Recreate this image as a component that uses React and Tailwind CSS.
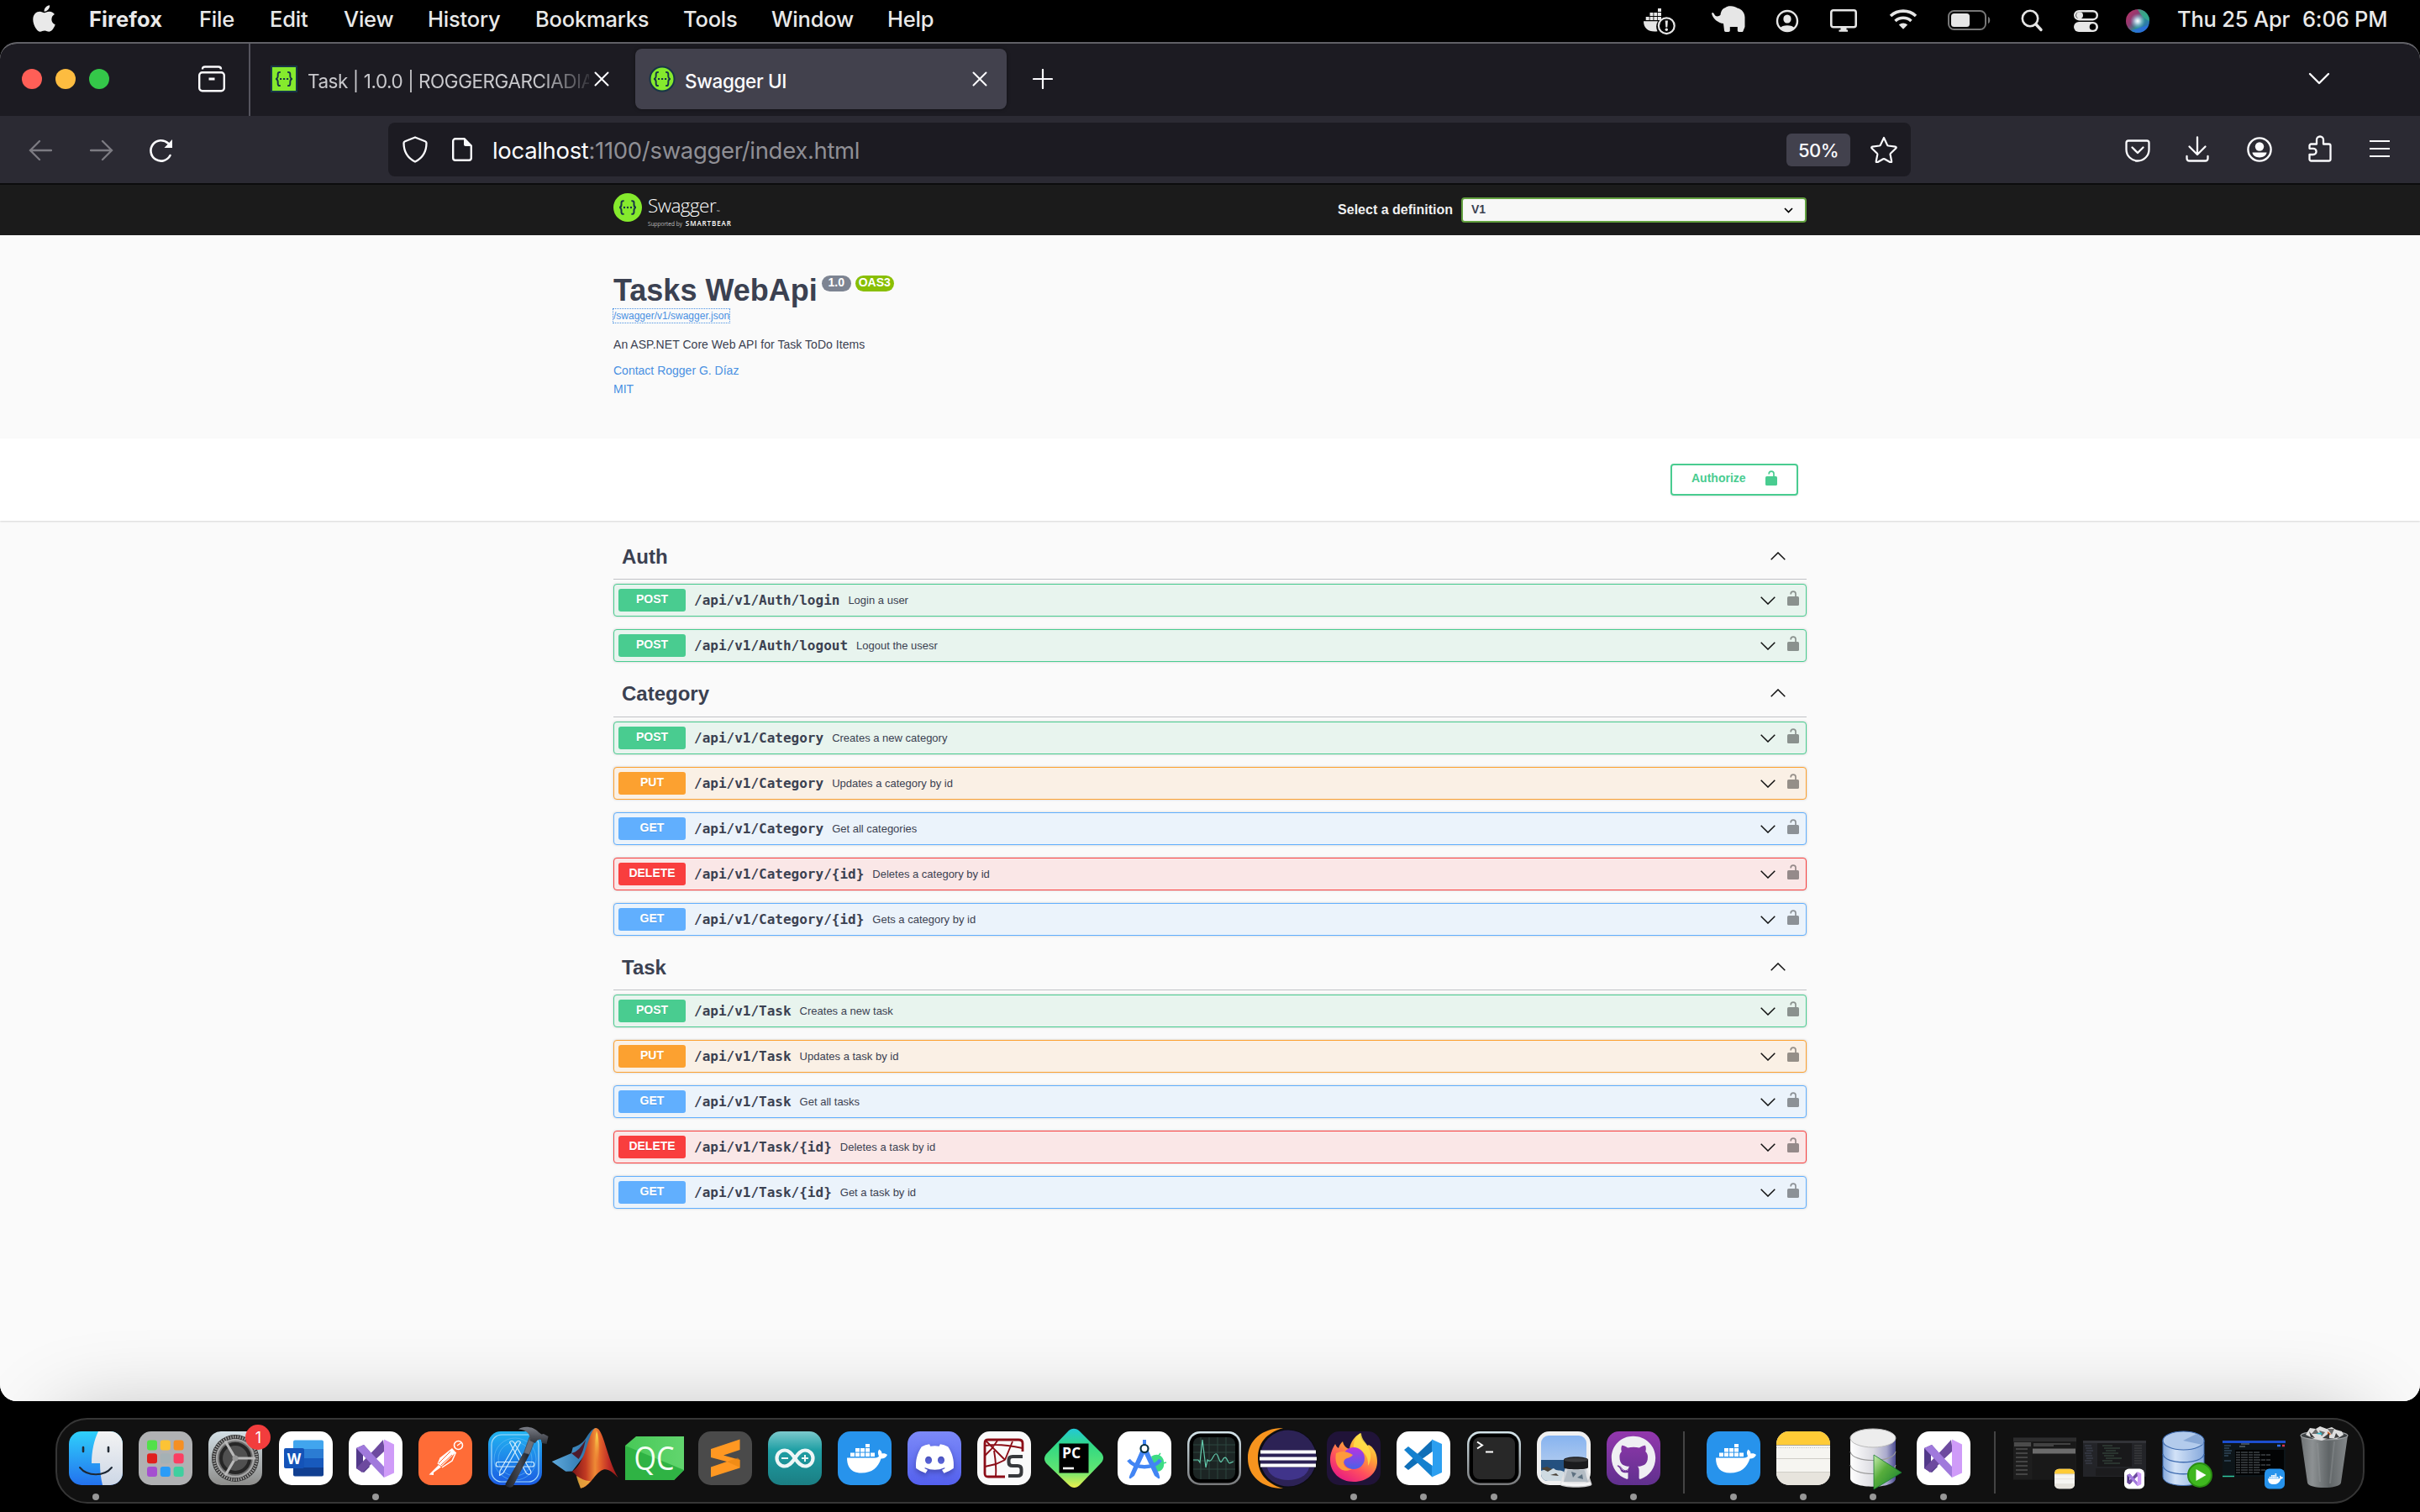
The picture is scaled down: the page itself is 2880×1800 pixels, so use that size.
import React from "react";
import { FaApple, FaDiscord, FaGithub } from "react-icons/fa";

/* ---------- shared marks ---------- */

function SwaggerMark({ size }) {
  return (
    <svg width={size} height={size} viewBox="0 0 34 34" className="shrink-0">
      <circle cx="17" cy="17" r="17" fill="#85ea2d" />
      <path d="M12.6 9.2c-2.6-.3-3.2.8-3.1 2.9.2 2.500.2 4.500-2.300 4.900 2.500.4 2.500 2.400 2.300 4.900-.1 2.100.5 3.200 3.100 2.900M21.400 9.200c2.600-.3 3.200.8 3.100 2.900-.2 2.500-.2 4.500 2.300 4.900-2.500.4-2.500 2.400-2.300 4.900.1 2.100-.5 3.200-3.100 2.900" fill="none" stroke="#173647" strokeWidth="2" />
      <circle cx="13" cy="17" r="1.200" fill="#173647" />
      <circle cx="17" cy="17" r="1.200" fill="#173647" />
      <circle cx="21" cy="17" r="1.200" fill="#173647" />
    </svg>
  );
}

function SwaggerFavicon({ square }) {
  return (
    <svg width="32" height="32" viewBox="0 0 32 32" className="shrink-0">
      {square ? (
        <rect x="1" y="1" width="30" height="30" fill="#85ea2d" stroke="#173647" strokeWidth="2" />
      ) : (
        <circle cx="16" cy="16" r="14.500" fill="#85ea2d" stroke="#173647" strokeWidth="2" />
      )}
      <path d="M11.800 8c-2.600-.3-3.200.8-3.100 2.900.2 2.500.2 4.700-2.500 5.100 2.700.4 2.700 2.600 2.500 5.100-.1 2.100.5 3.200 3.100 2.900M20.200 8c2.600-.3 3.200.8 3.100 2.900-.2 2.500-.2 4.700 2.500 5.100-2.700.4-2.700 2.600-2.500 5.100.1 2.100-.5 3.200-3.100 2.900" fill="none" stroke="#173647" strokeWidth="2" />
      <path d="M11 16h2.200M15 16h2.200M19 16h2.200" stroke="#173647" strokeWidth="2.200" />
    </svg>
  );
}

/* ---------- macOS menu bar ---------- */

function MenuBar() {
  return (
    <div className="flex h-[50px] shrink-0 items-center bg-black pb-[5px] font-['Inter',sans-serif] text-[25.500px] tracking-[-0.2px] font-medium text-[#e9e9e9] [&_span]:translate-y-px">
      <FaApple className="ml-[39px] h-[36px] w-[27px] shrink-0 -translate-y-[1px]" />
      <span className="ml-[40px] w-[131px] font-bold tracking-[0.1px]">Firefox</span>
      <span className="w-[84px]">File</span>
      <span className="w-[88px]">Edit</span>
      <span className="w-[100px]">View</span>
      <span className="w-[128px]">History</span>
      <span className="w-[176px]">Bookmarks</span>
      <span className="w-[105px]">Tools</span>
      <span className="w-[138px]">Window</span>
      <span>Help</span>

      <div className="ml-auto flex items-center">
        <svg width="40" height="34" viewBox="0 -2 40 34" className="mr-[40px] translate-y-[2px]" fill="#e6e6e6">
          <path d="M2.700 10h4v4h-4zM7.500 10h4v4h-4zM12.300 10h4v4h-4zM17 10h4v4h-4zM7.500 5h4v4h-4zM12.300 5h4v4h-4zM17 5h4v4h-4zM17 0h4v4h-4z" />
          <path d="M0 15.300h17c-2.500 4-2.300 8-.5 12C6 28.500 0 24 0 15.300z" />
          <circle cx="27.300" cy="20.700" r="9.400" fill="none" stroke="#e6e6e6" strokeWidth="2.200" />
          <path d="M25.700 14.500h3.200l-.6 8h-2z" />
          <circle cx="27.300" cy="25.300" r="1.700" />
        </svg>
        <svg width="42" height="32" viewBox="-1 0 42 32" className="mr-[35px]" fill="#e6e6e6">
          <path d="M0 9c1-2 2.300-.8 3.300 1.200 1.600 3 4.700 2.800 7.200.6.500-5 3-8 6-8.800C18 .5 20.500 0 23 .2c3 0 5.500 1 8 2.500 5 1.300 8.500 5.500 8.500 11V25l-1.800 4.500c-.3 1-.8 1.500-1.700 1.500h-3.500c-1 0-1.700-.6-1.700-1.700V25h-9v4.300c0 1.100-.6 1.700-1.700 1.700h-3.400c-1 0-1.500-.6-1.700-1.700L14 21C8.500 20.500 1.500 16 0 9z" />
        </svg>
        <svg width="28" height="28" viewBox="0 0 28 28" className="mr-[37px] translate-y-[2px]">
          <circle cx="14" cy="14" r="12" fill="none" stroke="#e6e6e6" strokeWidth="2.400" />
          <path d="M14 6.500c3 0 4.600 2.200 4.600 4.900S17 16.500 14 16.500s-4.600-2.400-4.600-5.100S11 6.500 14 6.500zM5 22.500c3-4.500 15-4.500 18 0-4.500 5-13.500 5-18 0z" fill="#e6e6e6" />
        </svg>
        <svg width="32" height="27" viewBox="0 0 32 27" className="mr-[38px] translate-y-[2px]">
          <rect x="1.300" y="1.300" width="29.400" height="20" rx="2.500" fill="none" stroke="#e6e6e6" strokeWidth="2.600" />
          <path d="M12.500 21h7v3.500H21v2.300H10.500v-2.300h2z" fill="#e6e6e6" />
        </svg>
        <svg width="34" height="25" viewBox="0 0 34 25" className="mr-[36px]">
          <g fill="none" stroke="#e6e6e6" strokeWidth="3.600">
            <path d="M2 9a22 22 0 0 1 30 0" />
            <path d="M7.500 15a14 14 0 0 1 19 0" />
          </g>
          <path d="M11.800 19.500a8 8 0 0 1 10.400 0L17 24.700z" fill="#e6e6e6" />
        </svg>
        <svg width="52" height="24" viewBox="0 0 52 24" className="mr-[35px] translate-y-px">
          <rect x="1" y="1" width="44" height="22" rx="6.500" fill="none" stroke="#777" strokeWidth="2" />
          <rect x="4" y="4" width="22" height="16" rx="3.500" fill="#e6e6e6" />
          <path d="M48 8c3 1 3 7 0 8z" fill="#777" />
        </svg>
        <svg width="27" height="27" viewBox="0 0 27 27" className="mr-[36px] translate-y-[2px]" fill="none" stroke="#e6e6e6">
          <circle cx="11" cy="11" r="9.200" strokeWidth="2.600" />
          <path d="M18 18l6 6.500" strokeWidth="3.400" strokeLinecap="round" />
        </svg>
        <svg width="29" height="26" viewBox="0 0 29 26" className="mr-[33px] translate-y-[2px]">
          <rect x="1.200" y="1.200" width="26.600" height="10" rx="5" fill="none" stroke="#e6e6e6" strokeWidth="2.400" />
          <circle cx="7" cy="6.200" r="4" fill="#e6e6e6" />
          <rect y="14" width="29" height="12" rx="6" fill="#e6e6e6" />
          <circle cx="22.500" cy="20" r="3.800" fill="#000" />
        </svg>
        <svg width="28" height="28" viewBox="0 0 28 28" className="mr-[33px] translate-y-[2px]">
          <defs>
            <radialGradient id="siriCore" cx=".5" cy=".5" r=".5">
              <stop offset="0" stopColor="#fff" />
              <stop offset=".3" stopColor="#cfe9f5" stopOpacity=".85" />
              <stop offset="1" stopColor="#7fb7d8" stopOpacity="0" />
            </radialGradient>
            <linearGradient id="siriBase" x1="0" y1=".1" x2="1" y2=".9">
              <stop offset="0" stopColor="#b93164" />
              <stop offset=".35" stopColor="#8f3a72" />
              <stop offset=".6" stopColor="#2c8f8f" />
              <stop offset="1" stopColor="#2b62c9" />
            </linearGradient>
          </defs>
          <circle cx="14" cy="14" r="14" fill="url(#siriBase)" />
          <path d="M14 0a14 14 0 0 1 14 14c-5-2-10-6-14-14z" fill="#35b08a" opacity=".8" />
          <path d="M6 25c6-1 12-4 21-6-3 8-13 12-21 6z" fill="#2a6fe0" opacity=".8" />
          <circle cx="14" cy="14" r="9" fill="url(#siriCore)" />
        </svg>
        <span className="w-[149px] whitespace-nowrap tracking-[-0.2px]">Thu 25 Apr</span>
        <span className="mr-[39px] w-[101px] whitespace-nowrap tracking-[-0.2px]">6:06 PM</span>
      </div>
    </div>
  );
}

/* ---------- Firefox chrome ---------- */

function CloseX() {
  return (
    <svg width="18" height="18" viewBox="0 0 18 18" className="shrink-0">
      <path d="M1.500 1.500l15 15M16.500 1.500l-15 15" stroke="#fbfbfe" strokeWidth="2" strokeLinecap="round" />
    </svg>
  );
}

function TabStrip() {
  return (
    <div className="flex h-[86px] shrink-0 bg-[#1c1b22] font-['Inter',sans-serif] text-[22.500px] text-[#fbfbfe]">
      <div className="flex h-[84px] shrink-0 items-center">
        <div className="ml-[26px] flex w-[104px] shrink-0 justify-between">
          <span className="size-6 rounded-full bg-[#ff5f57]" />
          <span className="size-6 rounded-full bg-[#fdbc40]" />
          <span className="size-6 rounded-full bg-[#34c749]" />
        </div>
        <svg width="32" height="32" viewBox="0 0 32 32" className="ml-[106px] shrink-0" fill="none" stroke="#fbfbfe">
          <rect x="1.200" y="8.200" width="29.600" height="22" rx="3.500" strokeWidth="2.400" />
          <path d="M5 4.500C5 2.500 6 1.500 8 1.500h16c2 0 3 1 3 3" strokeWidth="2.400" />
          <path d="M12.500 16h7" strokeWidth="3" />
        </svg>
      </div>
      <div className="ml-[28px] h-full w-[2px] shrink-0 bg-[#55545e]" />
      <div className="flex h-[84px] min-w-0 flex-1 items-center">
        <div className="ml-[24px] flex h-[72px] w-[402px] shrink-0 items-center">
          <SwaggerFavicon square />
          <span className="ml-[12px] w-[335px] whitespace-nowrap pt-[5px] tracking-[-0.45px] text-[#c9c9cd] [mask-image:linear-gradient(to_right,black_275px,transparent_345px)]">
            Task | 1.0.0 | ROGGERGARCIADIA
          </span>
          <span className="ml-[6px]"><CloseX /></span>
        </div>
        <div className="ml-[32px] flex h-[72px] w-[442px] shrink-0 items-center rounded-lg bg-[#42414d] pl-4 shadow-[0_0_4px_rgba(0,0,0,0.4)]">
          <SwaggerFavicon />
          <span className="ml-[11px] whitespace-nowrap pt-[5px] font-medium tracking-[-0.35px]">Swagger UI</span>
          <span className="ml-auto mr-[23px]"><CloseX /></span>
        </div>
        <svg width="24" height="24" viewBox="0 0 24 24" className="ml-[31px] shrink-0">
          <path d="M12 1v22M1 12h22" stroke="#fbfbfe" strokeWidth="2.200" strokeLinecap="round" />
        </svg>
        <svg width="26" height="16" viewBox="0 0 26 16" className="ml-auto mr-[107px]">
          <path d="M2 2l11 11L24 2" fill="none" stroke="#fbfbfe" strokeWidth="2.400" strokeLinecap="round" strokeLinejoin="round" />
        </svg>
      </div>
    </div>
  );
}

function Toolbar() {
  return (
    <div className="flex h-[82px] shrink-0 items-center border-b-2 border-[#0c0c0d] bg-[#2b2a33] font-['Inter',sans-serif] text-[#fbfbfe]">
      <svg width="28" height="26" viewBox="0 0 28 26" className="ml-[34px] shrink-0 translate-y-px" fill="none" stroke="#7c7b82" strokeWidth="2.300" strokeLinecap="round">
        <path d="M13 2L2 13l11 11M2 13h25" />
      </svg>
      <svg width="28" height="26" viewBox="0 0 28 26" className="ml-[45px] shrink-0 translate-y-px" fill="none" stroke="#7c7b82" strokeWidth="2.300" strokeLinecap="round">
        <path d="M15 2l11 11-11 11M26 13H1" />
      </svg>
      <svg width="29" height="29" viewBox="0 0 29 29" className="ml-[42px] shrink-0 translate-y-px">
        <path d="M25.500 20A12.200 12.200 0 1 1 23 5.500" fill="none" stroke="#fbfbfe" strokeWidth="2.600" strokeLinecap="round" />
        <path d="M28 1v10H18.500z" fill="#fbfbfe" />
      </svg>
      <div className="ml-[256px] flex h-16 w-[1812px] shrink-0 items-center rounded-lg bg-[#1c1b22]">
        <svg width="30" height="32" viewBox="0 0 30 32" className="ml-[17px]">
          <path d="M15 1.500L27 6.200c1 .4 1.500 1 1.500 2C28.500 18 24 26 15 30.500 6 26 1.500 18 1.500 8.200c0-1 .5-1.600 1.500-2z" fill="none" stroke="#fbfbfe" strokeWidth="2.300" strokeLinejoin="round" />
        </svg>
        <svg width="24" height="28" viewBox="0 0 24 28" className="ml-[29px]">
          <path d="M1.200 4A2.800 2.800 0 0 1 4 1.200h10.500L22.800 9.500V24a2.800 2.800 0 0 1-2.800 2.800H4A2.800 2.800 0 0 1 1.200 24z" fill="none" stroke="#fbfbfe" strokeWidth="2.400" strokeLinejoin="round" />
          <path d="M14 1v7a2 2 0 0 0 2 2h7z" fill="#fbfbfe" />
        </svg>
        <span className="ml-[24px] whitespace-nowrap pt-[3px] text-[27.500px] tracking-[-0.33px] text-[#8f8f95]">
          <span className="text-[#fbfbfe]">localhost</span>:1100/swagger/index.html
        </span>
        <span className="ml-auto flex h-[39px] w-[76px] items-center justify-center rounded-md bg-[#42414d] pt-[2px] text-[22px] font-medium tracking-[-0.6px]">50%</span>
        <svg width="32" height="32" viewBox="0 0 32 32" className="ml-[24px] mr-[16px]">
          <path d="M16 2l4 8.600c.3.500.7.800 1.300.9l8.400 1.100c1 .1 1.300 1.200.6 1.900l-6.200 6c-.4.400-.6.900-.5 1.500l1.600 8.200c.2.900-.7 1.500-1.500 1.100L16.700 27.300c-.5-.3-1-.3-1.500 0L8.200 31.300c-.8.400-1.700-.2-1.500-1.100L8.300 22c.1-.6-.1-1.100-.5-1.500l-6.200-6c-.7-.7-.3-1.800.6-1.900l8.400-1.100c.6-.1 1-.4 1.300-.9L16 2z" fill="none" stroke="#fbfbfe" strokeWidth="2.200" strokeLinejoin="round" />
        </svg>
      </div>
      <svg width="30" height="27" viewBox="0 0 30 27" className="ml-auto translate-y-px" fill="none" stroke="#fbfbfe" strokeWidth="2.300" strokeLinecap="round" strokeLinejoin="round">
        <path d="M4 1.500h22A2.600 2.600 0 0 1 28.500 4v8a13.500 13.500 0 0 1-27 0V4A2.600 2.600 0 0 1 4 1.500z" />
        <path d="M8.500 9.500L15 16l6.500-6.500" />
      </svg>
      <svg width="28" height="31" viewBox="0 0 28 31" className="ml-[42px] translate-y-[-1px]" fill="none" stroke="#fbfbfe" strokeWidth="2.300" strokeLinecap="round" strokeLinejoin="round">
        <path d="M14 1.500v20M4.500 12.500L14 22l9.500-9.500M1.500 24v2.500c0 2 1 3 3 3h19c2 0 3-1 3-3V24" />
      </svg>
      <svg width="30" height="30" viewBox="0 0 30 30" className="ml-[45px]">
        <circle cx="15" cy="15" r="13.600" fill="none" stroke="#fbfbfe" strokeWidth="2.400" />
        <circle cx="15" cy="11.500" r="5.200" fill="#fbfbfe" />
        <path d="M6.500 18.500h17c0 3-4 6-8.500 6s-8.500-3-8.500-6z" fill="#fbfbfe" />
      </svg>
      <svg width="28" height="32" viewBox="0 0 28 32" className="ml-[43px] translate-y-[-1px]" fill="none" stroke="#fbfbfe" strokeWidth="2.300" strokeLinejoin="round">
        <path d="M10 10.500V5.500a4 4 0 0 1 8 0v5h6.500a2 2 0 0 1 2 2v16a2 2 0 0 1-2 2h-21a2 2 0 0 1-2-2V23h4.500a3.600 3.600 0 0 0 0-7.200H1.500v-3.300a2 2 0 0 1 2-2z" />
      </svg>
      <svg width="26" height="22" viewBox="0 0 26 22" className="ml-[44px] mr-[35px] -translate-y-px">
        <path d="M1 2h24M1 11h24M1 20h24" stroke="#fbfbfe" strokeWidth="2.200" />
      </svg>
    </div>
  );
}

/* ---------- Swagger page ---------- */

function Lock({ color }) {
  return (
    <svg width="14" height="18" viewBox="0 0 14 18" className="shrink-0">
      <path d="M4.200 4.500V4a2.900 2.900 0 0 1 5.800 0v4" fill="none" stroke={color} strokeWidth="1.700" />
      <rect y="7" width="14" height="11" rx="1.600" fill={color} />
    </svg>
  );
}

function Chevron({ up }) {
  return (
    <svg width="18" height="10" viewBox="0 0 18 10" className="shrink-0">
      <path d={up ? "M.7 9.200L9 1l8.300 8.200" : "M.7.8L9 9 17.300.8"} fill="none" stroke="#111" strokeWidth="1.500" />
    </svg>
  );
}

const METHOD = {
  POST: { row: "border-[#49cc90] bg-[#e8f4ee]", badge: "bg-[#49cc90]" },
  PUT: { row: "border-[#fca130] bg-[#faf0e5]", badge: "bg-[#fca130]" },
  GET: { row: "border-[#61affe] bg-[#ebf3fb]", badge: "bg-[#61affe]" },
  DELETE: { row: "border-[#f93e3e] bg-[#fae7e7]", badge: "bg-[#f93e3e]" },
};

const SECTIONS = [
  {
    name: "Auth",
    header: "h-[70px] pb-[11px]",
    ops: [
      ["POST", "/api/v1/Auth/login", "Login a user"],
      ["POST", "/api/v1/Auth/logout", "Logout the usesr"],
    ],
  },
  {
    name: "Category",
    header: "h-[66px] pb-[12px]",
    ops: [
      ["POST", "/api/v1/Category", "Creates a new category"],
      ["PUT", "/api/v1/Category", "Updates a category by id"],
      ["GET", "/api/v1/Category", "Get all categories"],
      ["DELETE", "/api/v1/Category/{id}", "Deletes a category by id"],
      ["GET", "/api/v1/Category/{id}", "Gets a category by id"],
    ],
  },
  {
    name: "Task",
    header: "h-[65px] pb-[11px]",
    ops: [
      ["POST", "/api/v1/Task", "Creates a new task"],
      ["PUT", "/api/v1/Task", "Updates a task by id"],
      ["GET", "/api/v1/Task", "Get all tasks"],
      ["DELETE", "/api/v1/Task/{id}", "Deletes a task by id"],
      ["GET", "/api/v1/Task/{id}", "Get a task by id"],
    ],
  },
];

function Operation({ method, path, text }) {
  const c = METHOD[method];
  return (
    <div className={`flex h-[39px] items-center rounded-[4px] border pl-[5px] pr-[8px] shadow-[0_0_3px_rgba(0,0,0,0.19)] ${c.row}`}>
      <span className={`h-[27px] w-[80px] rounded-[3px] text-center text-[14px] leading-[24px] font-bold text-white [text-shadow:0_1px_0_rgba(0,0,0,0.1)] ${c.badge}`}>
        {method}
      </span>
      <span className="ml-[10px] font-['DejaVu_Sans_Mono',monospace] text-[16px] leading-5 font-bold">{path}</span>
      <span className="ml-[10px] text-[13px] leading-5">{text}</span>
      <span className="ml-auto mr-[14px] flex pt-px"><Chevron /></span>
      <span className="flex pb-[5px] opacity-40"><Lock color="#000" /></span>
    </div>
  );
}

function SwaggerPage() {
  return (
    <div className="flex min-h-0 flex-1 flex-col bg-[#fafafa] font-['Liberation_Sans',Arial,sans-serif] text-[#3b4151]">
      <div className="flex h-[60px] shrink-0 items-center bg-[#1b1b1b] pr-[730px] pl-[730px]">
        <div className="flex h-[40px] text-white">
          <SwaggerMark size="34" />
          <div className="ml-[7px] font-['Open_Sans',sans-serif]">
            <div className="mt-[4px] flex h-[26px] items-end text-[22.500px] leading-[30px] font-light tracking-[-0.55px]">
              Swagger<span className="ml-px text-[5px] leading-[16px]">™</span>
            </div>
            <div className="mt-px flex items-baseline gap-[4px] leading-[10px]">
              <span className="text-[6.500px] tracking-[0.1px] font-light">Supported by</span>
              <span className="text-[8px] font-semibold tracking-[0.9px]">SMARTBEAR</span>
            </div>
          </div>
        </div>
        <span className="ml-auto text-[16px] leading-5 font-bold text-[#f0f0f0]">Select a definition</span>
        <div className="ml-[10px] flex h-[30px] w-[411px] items-center rounded-[4px] border-2 border-[#62a03f] bg-[#f7f7f7] pr-[14px] pb-[2px] pl-[10px]">
          <span className="text-[14px] leading-5 font-bold">V1</span>
          <svg width="11" height="7" viewBox="0 0 11 7" className="ml-auto mt-[2px]">
            <path d="M1 1l4.500 4.500L10 1" fill="none" stroke="#000" strokeWidth="1.700" />
          </svg>
        </div>
      </div>

      <div className="flex h-[242px] shrink-0 flex-col items-start pt-[45px] pl-[730px]">
        <div className="flex h-10 items-start">
          <span className="pt-px text-[36px] leading-10 font-bold">Tasks WebApi</span>
          <span className="mt-[3px] ml-[5px] h-[19px] w-[35px] rounded-full bg-[#7d8492] text-center text-[14px] leading-[16px] font-bold text-white">1.0</span>
          <span className="mt-[3px] ml-[5px] h-[19px] w-[46px] rounded-full bg-[#89bf04] text-center text-[14px] leading-[16px] font-bold text-white">OAS3</span>
        </div>
        <span className="mt-[3px] text-[12px] leading-4 text-[#4990e2] outline-1 outline-[#4990e2] outline-dotted">/swagger/v1/swagger.json</span>
        <span className="mt-4 text-[14px] leading-5 tracking-[0.04px]">An ASP.NET Core Web API for Task ToDo Items</span>
        <span className="mt-[11px] text-[14px] leading-5 text-[#4990e2]">Contact Rogger G. Díaz</span>
        <span className="mt-[2px] text-[14px] leading-5 text-[#4990e2]">MIT</span>
      </div>

      <div className="z-0 flex h-[98px] shrink-0 justify-end bg-white pt-[30px] pr-[740px] shadow-[0_1px_2px_rgba(0,0,0,0.15)]">
        <div className="flex h-[38px] w-[152px] items-center rounded-[4px] border-2 border-[#49cc90] pr-[23px] pb-[4px] pl-[23px] shadow-[0_1px_2px_rgba(0,0,0,0.1)]">
          <span className="text-[14px] leading-5 font-bold text-[#49cc90]">Authorize</span>
          <span className="ml-auto flex"><Lock color="#49cc90" /></span>
        </div>
      </div>

      <div className="px-[730px]">
        {SECTIONS.map((s) => (
          <section key={s.name}>
            <div className={`flex items-end justify-between border-b border-[rgba(59,65,81,0.3)] pr-[25px] pl-[10px] ${s.header}`}>
              <h3 className="text-[24px] leading-[30px] font-bold">{s.name}</h3>
              <span className="pb-[11px]"><Chevron up /></span>
            </div>
            <div className="mt-[5px] flex flex-col gap-[15px]">
              {s.ops.map(([m, p, t]) => (
                <Operation key={m + p} method={m} path={p} text={t} />
              ))}
            </div>
          </section>
        ))}
      </div>
    </div>
  );
}

/* ---------- Dock icons ---------- */

function Tile({ children }) {
  return (
    <svg width="64" height="64" viewBox="0 0 64 64" className="overflow-visible">
      {children}
    </svg>
  );
}

function Finder() {
  return (
    <Tile>
      <defs>
        <linearGradient id="finL" x1="0" y1="0" x2="0" y2="1">
          <stop offset="0" stopColor="#2fd0fb" />
          <stop offset="1" stopColor="#2371ee" />
        </linearGradient>
        <linearGradient id="finR" x1="0" y1="0" x2="0" y2="1">
          <stop offset="0" stopColor="#f3f3f3" />
          <stop offset="1" stopColor="#cdd7e6" />
        </linearGradient>
      </defs>
      <rect width="64" height="64" rx="15" fill="url(#finL)" />
      <path d="M35 0h14a15 15 0 0 1 15 15v34a15 15 0 0 1-15 15h-9c-2-8-3-17-3-26H27C27 24 30 10 35 0z" fill="url(#finR)" />
      <path d="M17 19v5M47 19v5" stroke="#222a33" strokeWidth="2.600" strokeLinecap="round" />
      <path d="M13 43c9 11 29 11 38 0" fill="none" stroke="#1d2733" strokeWidth="2" strokeLinecap="round" />
    </Tile>
  );
}

function Launchpad() {
  const colors = ["#52e04a", "#fcc335", "#f58f23", "#e0201d", "#a5b1b5", "#fb3f62", "#a44fd0", "#2a9cf7", "#3fcf9f"];
  return (
    <Tile>
      <rect width="64" height="64" rx="15" fill="#b0b1b3" />
      {colors.map((c, i) => (
        <rect key={c} x={10 + (i % 3) * 15.800} y={10.500 + Math.floor(i / 3) * 15.800} width="12" height="12" rx="3" fill={c} />
      ))}
    </Tile>
  );
}

function Settings() {
  return (
    <div className="relative size-16">
      <Tile>
        <defs>
          <linearGradient id="setBg" x1="0" y1="0" x2="0" y2="1">
            <stop offset="0" stopColor="#d3dfe5" />
            <stop offset="1" stopColor="#8d8d8b" />
          </linearGradient>
        </defs>
        <rect width="64" height="64" rx="15" fill="url(#setBg)" />
        <circle cx="32" cy="32" r="28" fill="#2c2c2c" />
        <circle cx="32" cy="32" r="25.500" fill="none" stroke="#9b9b9b" strokeWidth="3.500" strokeDasharray="1.600 1.300" />
        <circle cx="32" cy="32" r="22" fill="#6a6a6a" stroke="#a5a5a5" strokeWidth="2.500" />
        <circle cx="32" cy="32" r="17" fill="#505050" stroke="#262626" strokeWidth="4" />
        <path d="M32 32h24M32 32L20 11.500M32 32L20 52.500" stroke="#b9b9b9" strokeWidth="3.200" />
        <circle cx="32" cy="32" r="3.500" fill="#999" />
      </Tile>
      <span className="absolute -top-[8px] -right-[10px] flex size-[30px] items-center justify-center rounded-full bg-[#f23d3d] font-['Inter',sans-serif] text-[18px] text-white">1</span>
    </div>
  );
}

function Word() {
  return (
    <Tile>
      <rect width="64" height="64" rx="15" fill="#fff" />
      <path d="M19 10.500h32a2 2 0 0 1 2 2V21H17v-8.500a2 2 0 0 1 2-2z" fill="#41a5ee" />
      <path d="M17 21h36v11H17z" fill="#2b7cd3" />
      <path d="M17 32h36v11H17z" fill="#185abd" />
      <path d="M17 43h36v8.500a2 2 0 0 1-2 2H19a2 2 0 0 1-2-2z" fill="#103f91" />
      <rect x="6" y="20" width="24" height="24" rx="2" fill="#1453b8" />
      <text x="18" y="38.500" textAnchor="middle" fontFamily="Open Sans, sans-serif" fontWeight="700" fontSize="17" fill="#fff">W</text>
    </Tile>
  );
}

function VisualStudioShape() {
  return (
    <g>
      <path d="M9 20l9-4 7 8-8 9 8 9-7 7-9-5z" fill="#52398a" />
      <path d="M17 24v17l9-8.500z" fill="#fff" />
      <path d="M41 10l2 14-27 25-7-5L32 20z" fill="#6d4a9f" />
      <path d="M9 20l9-4 24 26v13z" fill="#a079dc" />
      <path d="M42 9.500l12 6v34L42 55z" fill="#cf9bf8" />
      <path d="M42 24v17l-9-8.500z" fill="#fff" />
    </g>
  );
}

function VisualStudio() {
  return (
    <Tile>
      <rect width="64" height="64" rx="15" fill="#fff" />
      <VisualStudioShape />
    </Tile>
  );
}

function Postman() {
  return (
    <Tile>
      <rect width="64" height="64" rx="15" fill="#ff6c37" />
      <circle cx="47.500" cy="16.500" r="5" fill="none" stroke="#fff" strokeWidth="1.600" />
      <path d="M46 17l5-3.500" stroke="#fff" strokeWidth="1.300" />
      <path d="M40 20l4.500 5-17 16.500-5-3 3-7z" fill="#fff" />
      <path d="M24 38l14-14M27 40l13-12" stroke="#ff6c37" strokeWidth="1" />
      <path d="M24 40l3 2.500-9 6.500v3l-5.500-.5z" fill="#fff" />
      <path d="M44.500 25L40 35l-12 8" fill="none" stroke="#fff" strokeWidth="1.500" />
    </Tile>
  );
}

function Xcode() {
  return (
    <Tile>
      <defs>
        <linearGradient id="xcBg" x1="0" y1="0" x2="0" y2="1">
          <stop offset="0" stopColor="#22b4f1" />
          <stop offset="1" stopColor="#1b5be2" />
        </linearGradient>
        <linearGradient id="xcHam" x1="0" y1="0" x2="1" y2="0">
          <stop offset="0" stopColor="#1d2026" />
          <stop offset=".6" stopColor="#444852" />
          <stop offset="1" stopColor="#1d2026" />
        </linearGradient>
        <linearGradient id="xcHead" x1="0" y1="0" x2="0" y2="1">
          <stop offset="0" stopColor="#7a7d86" />
          <stop offset="1" stopColor="#2f3239" />
        </linearGradient>
      </defs>
      <rect width="64" height="64" rx="15" fill="url(#xcBg)" />
      <rect x="4" y="4" width="56" height="56" rx="12" fill="none" stroke="#a9ddfb" strokeWidth="1.200" />
      <circle cx="32" cy="33" r="25" fill="none" stroke="#67bdf5" strokeWidth=".6" />
      <circle cx="32" cy="33" r="20" fill="none" stroke="#67bdf5" strokeWidth=".6" />
      <g fill="none" stroke="#d4eefd" strokeWidth="1.200" strokeLinejoin="round">
        <path d="M25.500 13c1-2 4-2 5 0l20 34c1 2 0 4-2 4.500l-3-1.500z" />
        <path d="M38.500 13c-1-2-4-2-5 0L14 47l-.5 5.500 4.500-3z" />
        <path d="M11.500 36.500h41c3 0 3 5.500 0 5.500h-41c-3 0-3-5.500 0-5.500z" />
      </g>
      <path d="M42 25.500l7 2-19 37c-2 4-10 2-9.500-2z" fill="url(#xcHam)" />
      <path d="M49 7l6.500 3-6.500 17.500-6.500-2z" fill="#6c7079" stroke="#3a3d44" strokeWidth=".6" />
      <path d="M36-2.500C42-7 54-6 60 1l3.500 2.500L66 3l5.500 3-2 9-5.500-1-1-4c-3-.5-5 0-7 4l-6.500-3c1-8-4-13-13.500-13.500z" fill="url(#xcHead)" />
    </Tile>
  );
}

function Matlab() {
  return (
    <Tile>
      <defs>
        <linearGradient id="mlA" x1="0" y1="0" x2="1" y2="0">
          <stop offset="0" stopColor="#7a1418" />
          <stop offset=".3" stopColor="#c23a22" />
          <stop offset=".5" stopColor="#ee8a35" />
          <stop offset=".62" stopColor="#e25f2a" />
          <stop offset=".8" stopColor="#c02d27" />
          <stop offset="1" stopColor="#8d1512" />
        </linearGradient>
        <linearGradient id="mlB" x1="0" y1="0" x2="1" y2="0">
          <stop offset="0" stopColor="#5fa9dc" />
          <stop offset=".5" stopColor="#3d87bd" />
          <stop offset="1" stopColor="#2a6a9b" />
        </linearGradient>
        <radialGradient id="mlC" cx=".5" cy=".1" r=".9">
          <stop offset="0" stopColor="#fbe04e" />
          <stop offset="1" stopColor="#f2913a" stopOpacity="0" />
        </radialGradient>
      </defs>
      <path d="M-7.300 36L16 26l1.700-6.700C24 17 29 15 34 7c4-6 7-11 11.300-11L32 28 17 47.500 9.300 47.700z" fill="url(#mlB)" />
      <path d="M16 26c7-1 12-8 17-16-2 9-4 17-8.500 23z" fill="#4d1b2c" />
      <path d="M16.700 48C24 43 28 35 32 25c4-11 8-29 13.300-29C54-4 58 32 71.700 55.300 63 46 57 43 51 47c-9 6-13 19-24 20.700C25 58 23 51 16.700 48z" fill="url(#mlA)" />
      <path d="M46-1c4 12 4 28 1 40-3-10-5-24-1-40z" fill="url(#mlC)" />
      <path d="M22 53c1 5 3 10 5 14.700 5-1 8-4 12-9-5 1-11-2-17-5.700z" fill="#f6c244" opacity=".75" />
    </Tile>
  );
}

function QC() {
  return (
    <Tile>
      <defs>
        <linearGradient id="qcBg" x1="0" y1="0" x2="1" y2="0">
          <stop offset="0" stopColor="#47c957" />
          <stop offset="1" stopColor="#62d56e" />
        </linearGradient>
      </defs>
      <path d="M10 6h57v40L55 58H-3V17z" fill="url(#qcBg)" />
      <path d="M-3 17l70 29-12 12H-3z" fill="#2fb344" />
      <text x="7.500" y="45.500" fontFamily="Open Sans, sans-serif" fontWeight="500" fontSize="38" fill="#f4fff4" textLength="48" lengthAdjust="spacingAndGlyphs">QC</text>
    </Tile>
  );
}

function Sublime() {
  return (
    <Tile>
      <rect width="64" height="64" rx="15" fill="#4a4a4a" />
      <path d="M15 21L49.500 9.500V22L30 28.500l19.500 5.500v9.500L15 54.500V42.500l19-6.500-19-5z" fill="#ff9822" />
      <path d="M34 36l13-4.500 2.500 2.500v9z" fill="#e8830f" opacity=".6" />
    </Tile>
  );
}

function Arduino() {
  return (
    <Tile>
      <defs>
        <linearGradient id="ardBg" x1="0" y1="0" x2="0" y2="1">
          <stop offset="0" stopColor="#7cc9cc" />
          <stop offset=".35" stopColor="#1f9fa4" />
          <stop offset="1" stopColor="#1b7e83" />
        </linearGradient>
      </defs>
      <rect width="64" height="64" rx="15" fill="url(#ardBg)" />
      <path d="M32 32c-4-6-7-9.500-12-9.500a9.500 9.500 0 0 0 0 19c5 0 8-3.500 12-9.500s7-9.500 12-9.500a9.500 9.500 0 0 1 0 19c-5 0-8-3.500-12-9.500z" fill="none" stroke="#eef6f6" strokeWidth="4.200" />
      <path d="M16 32h8M40 32h8M44 28v8" stroke="#eef6f6" strokeWidth="2" />
    </Tile>
  );
}

function WhaleShape() {
  return (
    <g fill="#fff">
      <path d="M15 25.500h5v4.500h-5zM21 25.500h5v4.500h-5zM27 25.500h5v4.500h-5zM33 25.500h5v4.500h-5zM39 25.500h5v4.500h-5zM21 20h5v4.500h-5zM27 20h5v4.500h-5zM33 20h5v4.500h-5zM33 15h5v4h-5z" />
      <path d="M11 31.500h34c2-.3 3.500-1 4-2-1.500-3-1.500-6 .5-8 2 1.500 3 3 3 5 2.500-.5 5 0 6.500 1.500-1.500 3-4 4.500-7.500 4.500C48 43 41 49.500 28 49.500c-12 0-17-7-17-18z" />
    </g>
  );
}

function DockerDesktop() {
  return (
    <Tile>
      <rect width="64" height="64" rx="15" fill="#2793ec" />
      <WhaleShape />
    </Tile>
  );
}

function Discord() {
  return (
    <div className="flex size-16 items-center justify-center rounded-[15px] bg-linear-to-b from-[#7c89f8] to-[#5460ee]">
      <FaDiscord className="size-[49px] text-white drop-shadow-[0_3px_3px_rgba(40,40,120,0.5)]" />
    </div>
  );
}

function Spyder() {
  return (
    <Tile>
      <rect width="64" height="64" rx="15" fill="#fafafa" />
      <g fill="none" stroke="#8c0d17" strokeWidth="2.800">
        <path d="M54 24V14c0-3-2-4-5-4H13c-3 0-4 1-4 4v36c0 3 1 4 4 4h20" />
        <path d="M10 11l23 23M24 11l-7 10-8 8M33 34l9-22M10 17c10-2 25-1 44 3M20 23c2 12 3 20 2 31M9 42l13-3 11-5" strokeWidth="1.900" />
      </g>
      <path d="M54 30H42c-3 0-4.500 1.500-4.500 4v3c0 2.500 1.500 4 4.500 4h6c3 0 4.500 1.500 4.500 4v4c0 2.500-1.500 4-4.500 4H37" fill="none" stroke="#37393c" strokeWidth="4" />
    </Tile>
  );
}

function PyCharm() {
  return (
    <Tile>
      <defs>
        <linearGradient id="pcBg" x1="0" y1="0" x2="0" y2="1">
          <stop offset="0" stopColor="#22c8d6" />
          <stop offset=".3" stopColor="#33d983" />
          <stop offset=".7" stopColor="#5fe572" />
          <stop offset="1" stopColor="#eef04e" />
        </linearGradient>
      </defs>
      <path d="M26-1c4-3 8-3 12 0l26 26c4 4 4 9 0 13L39 64c-4 4-9 4-13 0L0 39c-4-4-4-9 0-13z" fill="url(#pcBg)" />
      <rect x="14.500" y="14.500" width="35" height="35" fill="#000" />
      <text x="18" y="32" fontFamily="Open Sans, sans-serif" fontWeight="700" fontSize="17.500" fill="#fff">PC</text>
      <path d="M19 44h13" stroke="#fff" strokeWidth="2.600" />
    </Tile>
  );
}

function AndroidStudio() {
  return (
    <Tile>
      <rect width="64" height="64" rx="15" fill="#fff" />
      <path d="M40 30c8-6 17 0 15 11-1 5-5 8-10 6z" fill="#3ddc84" />
      <path d="M48 30l3-4M54 38l4-1" stroke="#3ddc84" strokeWidth="1.500" />
      <path d="M30 20L16 52l-1 3 4-3 13-28 13 28 4 3-1-4-14-31z" fill="#4285f4" stroke="#4285f4" strokeWidth="2.500" strokeLinejoin="round" />
      <path d="M13 34c8 11 30 11 38 0" fill="none" stroke="#4285f4" strokeWidth="4.500" />
      <path d="M32 10v8" stroke="#4285f4" strokeWidth="4" />
      <circle cx="32" cy="20.500" r="4.500" fill="#fff" stroke="#073042" strokeWidth="2.200" />
    </Tile>
  );
}

function ActivityMonitor() {
  return (
    <Tile>
      <defs>
        <linearGradient id="frame" x1="0" y1="0" x2="0" y2="1">
          <stop offset="0" stopColor="#d5e6ec" />
          <stop offset="1" stopColor="#77787a" />
        </linearGradient>
      </defs>
      <rect width="64" height="64" rx="15" fill="url(#frame)" />
      <rect x="2.500" y="2.500" width="59" height="59" rx="13" fill="#000" />
      <rect x="7" y="7" width="50" height="50" rx="8" fill="#1c2524" />
      <path d="M7 16h50M7 25h50M7 35h50M7 45h50M16 7v50M26 7v50M36 7v50M46 7v50" stroke="#2f4a44" strokeWidth=".9" />
      <path d="M7 34h6l2 3 3-27 4 33 2-9c3 3 5 0 7-4s4-5 6 1 3 7 5 3 4-4 6 1 3 2 7 1" fill="none" stroke="#62c9ab" strokeWidth="1.200" />
    </Tile>
  );
}

function Eclipse() {
  return (
    <Tile>
      <path d="M31-4C7-4-11 10-11 32s18 36 42 36C11 62 1 50 1 32S11 2 31-4z" fill="#f7941e" />
      <circle cx="37" cy="32" r="34.500" fill="#0c0c14" />
      <circle cx="37" cy="32" r="33.500" fill="#2c2255" />
      <path d="M12 43h50c-4 20-46 20-50 0z" fill="#40348a" />
      <path d="M4 22.500h66v4H4zM3 30.500h68v4H3zM4 38.500h66v4H4z" fill="#fff" />
    </Tile>
  );
}

function Firefox() {
  return (
    <Tile>
      <defs>
        <linearGradient id="ffA" x1=".8" y1="0" x2=".2" y2="1">
          <stop offset="0" stopColor="#fff44f" />
          <stop offset=".35" stopColor="#ffa436" />
          <stop offset=".65" stopColor="#ff4f5e" />
          <stop offset="1" stopColor="#e31587" />
        </linearGradient>
        <linearGradient id="ffB" x1="0" y1="0" x2="0" y2="1">
          <stop offset="0" stopColor="#b833e1" />
          <stop offset="1" stopColor="#4a61e8" />
        </linearGradient>
      </defs>
      <rect width="64" height="64" rx="15" fill="#201338" />
      <path d="M4 34c0-8 3-14 6-19 1 2 2 4 4 5 1-4 3-6 5-8 1 5 4 8 8 9 1-8 6-15 13-19 0 8 4 10 8 15 3-2 3 0 5 1 5 5 7 11 7 18 0 14-12 24-28 24S4 49 4 34z" fill="url(#ffA)" />
      <path d="M32 20c-1-8 3-14 9-18 0 8 7 12 9 18 4 8 2 16-1 21 1-13-6-19-17-21z" fill="#ffe14a" opacity=".8" />
      <circle cx="32" cy="32" r="13" fill="url(#ffB)" />
      <path d="M11 26c6-3 12-3 20 2-3 4-7 3-10 6-3 5 2 11 9 11-12 6-22-4-19-19z" fill="#ff9a3c" />
    </Tile>
  );
}

function VSCode() {
  return (
    <Tile>
      <rect width="64" height="64" rx="15" fill="#fff" />
      <path d="M42 10.500L9 42l5 4 29-22z" fill="#0f6fb8" />
      <path d="M42 54L9 22l5-4 29 23z" fill="#1481cf" />
      <path d="M42 9.500l12 5.500v34L42 54.500z" fill="#2c9ff0" />
      <path d="M43 24v17l-12-8.500z" fill="#fff" />
    </Tile>
  );
}

function Terminal() {
  return (
    <Tile>
      <rect width="64" height="64" rx="15" fill="url(#frame)" />
      <rect x="2.500" y="2.500" width="59" height="59" rx="13" fill="#000" />
      <rect x="7" y="7" width="50" height="50" rx="8" fill="#282828" />
      <path d="M12 12.500l6 4-6 4M22 24.500h9" fill="none" stroke="#fff" strokeWidth="2" />
    </Tile>
  );
}

function Preview() {
  return (
    <Tile>
      <defs>
        <linearGradient id="sky" x1="0" y1="0" x2="0" y2="1">
          <stop offset="0" stopColor="#86b3f0" />
          <stop offset="1" stopColor="#c8d8ee" />
        </linearGradient>
      </defs>
      <rect width="64" height="64" rx="15" fill="#f0f0f0" />
      <rect x="5" y="5" width="54" height="54" rx="9" fill="url(#sky)" />
      <path d="M5 34h54v17a8 8 0 0 1-8 8H13a8 8 0 0 1-8-8z" fill="#24507f" />
      <path d="M5 47c6-3 10 0 15-3 4 4 8 1 12 4v11H13a8 8 0 0 1-8-8z" fill="#cfdbe2" />
      <path d="M5 44l7-2 6 3-5 3zM16 52l7-2 3 3z" fill="#4b4338" />
      <path d="M34 43h25l6.500 20c0 5-38 5-38 0z" fill="#e2e2e4" opacity=".9" />
      <path d="M36.500 46h20l4.500 14H32z" fill="#b3bcc4" />
      <path d="M30 60c6 3 28 3 33 0l1 3c-3 3-32 3-35 0z" fill="#f5f5f6" />
      <path d="M41 48l6 2-4 5zM48 55l6-4 1 6z" fill="#5d7080" />
      <path d="M32 34c0-5 29-5 29 0v9c0 3-29 3-29 0z" fill="#1b1b1d" />
      <ellipse cx="46.500" cy="34" rx="14" ry="2.500" fill="#3a3a3c" />
    </Tile>
  );
}

function GithubDesktop() {
  return (
    <div className="flex size-16 items-center justify-center rounded-[15px] bg-linear-to-b from-[#9337ad] to-[#60308e]">
      <FaGithub className="size-[54px] text-[#efeff3]" />
    </div>
  );
}

function NotesShape() {
  return (
    <g>
      <defs>
        <clipPath id="noteClip"><rect width="64" height="64" rx="15" /></clipPath>
      </defs>
      <g clipPath="url(#noteClip)">
        <rect width="64" height="64" fill="#f6f5f1" />
        <rect width="64" height="16" fill="#ffcb36" />
        <path d="M0 16.500h64" stroke="#a8a393" strokeWidth="1" />
        <path d="M0 19.500h64" stroke="#bbb" strokeWidth="1" strokeDasharray="1 1.500" />
        <path d="M0 32.500h64M0 48.500h64" stroke="#cfcdc7" strokeWidth="1.200" />
        <rect y="49" width="64" height="15" fill="#e7e4dd" />
      </g>
    </g>
  );
}

function Notes() {
  return (
    <Tile>
      <NotesShape />
    </Tile>
  );
}

function DatabaseGrey() {
  return (
    <Tile>
      <defs>
        <linearGradient id="dbG" x1="0" y1="0" x2="1" y2="0">
          <stop offset="0" stopColor="#fff" />
          <stop offset=".5" stopColor="#dcdce2" />
          <stop offset=".8" stopColor="#a9a9cc" />
          <stop offset="1" stopColor="#4c4c92" />
        </linearGradient>
        <linearGradient id="play" x1="0" y1="0" x2="1" y2="1">
          <stop offset="0" stopColor="#c9efb0" />
          <stop offset=".4" stopColor="#57ad3c" />
          <stop offset="1" stopColor="#0f7a2e" />
        </linearGradient>
      </defs>
      <path d="M5 8v48c0 13 54 13 54 0V8z" fill="url(#dbG)" />
      <ellipse cx="32" cy="8" rx="27" ry="11" fill="#ededed" stroke="#bbb" />
      <path d="M5 24c2 14 52 14 54 0M5 40c2 14 52 14 54 0" fill="none" stroke="#9c9c9c" strokeWidth="1.200" />
      <path d="M33 28l33 21-33 20z" fill="url(#play)" stroke="#177a31" strokeWidth=".8" />
    </Tile>
  );
}

function DatabaseBlue() {
  return (
    <Tile>
      <defs>
        <linearGradient id="dbB" x1="0" y1="0" x2="1" y2="0">
          <stop offset="0" stopColor="#86a9dc" />
          <stop offset=".3" stopColor="#d2e2f7" />
          <stop offset="1" stopColor="#86a9dc" />
        </linearGradient>
      </defs>
      <g transform="translate(2 0)">
        <path d="M4 11v43c0 14 49 14 49 0V11z" fill="url(#dbB)" stroke="#3f6cb0" strokeWidth="1" />
        <ellipse cx="28.500" cy="11" rx="24.500" ry="11" fill="#b3cbec" stroke="#3f6cb0" strokeWidth="1.200" />
        <path d="M28 11L44 3c8 4 10 9 7 13z" fill="#88a8d6" />
        <path d="M4 27c2 13 47 13 49 0M4 41c2 13 47 13 49 0" fill="none" stroke="#3f6cb0" strokeWidth="1.400" />
        <circle cx="48" cy="52" r="14" fill="#3fb71f" stroke="#2a8d12" strokeWidth="2" />
        <path d="M43.500 45l12 7-12 7z" fill="#fff" />
      </g>
    </Tile>
  );
}

function Thumb({ kind }) {
  const rows = Array.from({ length: 11 });
  return (
    <svg width="76" height="64" viewBox="0 0 76 64" className="overflow-visible">
      {kind === "notes" && (
        <g>
          <rect y="7.500" width="75" height="50" fill="#1e1e1e" />
          <rect y="7.500" width="75" height="4.500" fill="#2d2d2e" />
          <rect x="1" y="13" width="20" height="5" fill="#4b4b4b" />
          {rows.slice(0, 7).map((_, i) => (
            <path key={i} d={`M3 ${21 + i * 5}h14`} stroke="#6a6a6a" strokeWidth="1" />
          ))}
          <rect x="22.500" y="12" width="52" height="45" fill="#191919" />
          <path d="M24 15h44M24 17h24" stroke="#777" strokeWidth=".9" />
          <rect x="23" y="20.500" width="51" height="6" fill="#6c6c6c" />
          <g transform="translate(49 44.500) scale(.375)"><NotesShape /></g>
        </g>
      )}
      {kind === "studio" && (
        <g>
          <rect y="11" width="75" height="43" fill="#232428" />
          <rect y="11" width="75" height="3" fill="#323338" />
          <rect x="17" y="14" width="41" height="28" fill="#19191b" />
          {rows.slice(0, 8).map((_, i) => (
            <g key={i} strokeWidth=".8" opacity=".75">
              <path d={`M${2 + (i % 3)} ${17 + i * 3}h8`} stroke="#566175" />
              <path d={`M${23 + (i % 3) * 2} ${17 + i * 3}h${12 + ((i * 7) % 14)}`} stroke="#54745f" />
              <path d={`M61 ${17 + i * 3}h9`} stroke="#5a5a5c" />
            </g>
          ))}
          <path d="M15 44h45v9H15z" fill="#1c1c1e" />
          <g transform="translate(49 44.500) scale(.375)">
            <rect width="64" height="64" rx="15" fill="#fff" />
            <VisualStudioShape />
          </g>
        </g>
      )}
      {kind === "docker" && (
        <g>
          <rect y="11" width="75" height="43" fill="#0d1519" />
          <rect y="11" width="75" height="3" fill="#1c4fd0" />
          <rect x="15" y="22" width="58" height="30" fill="#020304" />
          <path d="M2 17h8M2 20h6M2 23h9M2 26h8M2 29h5M2 35h8" stroke="#43607a" strokeWidth="1" />
          <path d="M22 15h10M20 18h7" stroke="#7d8b95" strokeWidth="1" />
          <path d="M65 17h4" stroke="#2f6fe8" strokeWidth="2.500" />
          <path d="M71 17h3" stroke="#d8364d" strokeWidth="2.500" />
          {rows.slice(0, 9).map((_, i) => (
            <path key={i} d={`M16 ${25 + i * 3}h${28 + ((i * 13) % 26)}`} stroke="#5d6468" strokeWidth="1.100" strokeDasharray="5 1 8 1" />
          ))}
          <path d="M0 53.500h14" stroke="#2fc9a0" strokeWidth="1.500" />
          <g transform="translate(50 44.500) scale(.375)">
            <rect width="64" height="64" rx="15" fill="#2793ec" />
            <WhaleShape />
          </g>
        </g>
      )}
    </svg>
  );
}

function Trash() {
  return (
    <Tile>
      <defs>
        <linearGradient id="can" x1="0" y1="0" x2="1" y2="0">
          <stop offset="0" stopColor="#6f7375" />
          <stop offset=".25" stopColor="#8d9193" />
          <stop offset=".6" stopColor="#5f6466" />
          <stop offset="1" stopColor="#85898b" />
        </linearGradient>
      </defs>
      <path d="M4 5c0-5 56-5 56 0l-8 56c-1 8-39 8-40 0z" fill="url(#can)" />
      <ellipse cx="32" cy="5" rx="28" ry="5" fill="#3d4143" stroke="#9ea2a4" strokeWidth="1.200" />
      <path d="M10 4l5-8 7 1 5-3 8 3 6-2 5 3 7 2 2 4-8 5-10-1-8 3-9-2z" fill="#dedede" />
      <path d="M17 3l5-6 4 6zM36-3l5 7 3-7zM26-1l3 7 4-5z" fill="#6b6b6b" />
      <path d="M22 3l6-2 2 3z" fill="#2bb7c6" />
      <path d="M36 0l4 3-4 4z" fill="#d8652a" />
      <path d="M30 8l8-6v7zM14 0l2 7 5 1zM46 2l4 5-6 1z" fill="#3c3c3c" />
      <path d="M24 14l3 46M44 12l-5 50" stroke="#9a9ea0" strokeWidth="2" opacity=".35" />
    </Tile>
  );
}

function Slot({ running, children }) {
  return (
    <div className="relative flex w-[83.180px] shrink-0 flex-col items-center">
      {children}
      {running && <span className="absolute top-[74px] size-2 rounded-full bg-[#989898]" />}
    </div>
  );
}

function Dock() {
  return (
    <div className="relative mx-auto mt-[20px] flex h-[102px] w-[2748px] shrink-0 rounded-[38px] border-2 border-[#363636] bg-[#111] pt-[14px] pl-[4.500px] shadow-[0_0_100px_rgba(0,0,0,0.29)]">
      <Slot running><Finder /></Slot>
      <Slot><Launchpad /></Slot>
      <Slot><Settings /></Slot>
      <Slot><Word /></Slot>
      <Slot running><VisualStudio /></Slot>
      <Slot><Postman /></Slot>
      <Slot><Xcode /></Slot>
      <Slot><Matlab /></Slot>
      <Slot><QC /></Slot>
      <Slot><Sublime /></Slot>
      <Slot><Arduino /></Slot>
      <Slot><DockerDesktop /></Slot>
      <Slot><Discord /></Slot>
      <Slot><Spyder /></Slot>
      <Slot><PyCharm /></Slot>
      <Slot><AndroidStudio /></Slot>
      <Slot><ActivityMonitor /></Slot>
      <Slot><Eclipse /></Slot>
      <Slot running><Firefox /></Slot>
      <Slot running><VSCode /></Slot>
      <Slot running><Terminal /></Slot>
      <Slot><Preview /></Slot>
      <Slot running><GithubDesktop /></Slot>
      <div className="mr-[16px] ml-[18px] h-[74px] w-[2px] shrink-0 bg-[#444]" />
      <Slot running><DockerDesktop /></Slot>
      <Slot running><Notes /></Slot>
      <Slot running><DatabaseGrey /></Slot>
      <Slot running><VisualStudio /></Slot>
      <div className="mr-[17px] ml-[19px] h-[74px] w-[2px] shrink-0 bg-[#444]" />
      <Slot><Thumb kind="notes" /></Slot>
      <Slot><Thumb kind="studio" /></Slot>
      <Slot><DatabaseBlue /></Slot>
      <Slot><Thumb kind="docker" /></Slot>
      <Slot><Trash /></Slot>
    </div>
  );
}

export default function App() {
  return (
    <div className="flex h-[1800px] w-[2880px] flex-col overflow-hidden bg-black">
      <MenuBar />
      <div className="relative flex h-[1618px] w-full shrink-0 flex-col overflow-hidden rounded-[20px] border-t-2 border-[#606066] bg-[#fafafa]">
        <TabStrip />
        <Toolbar />
        <SwaggerPage />
      </div>
      <Dock />
    </div>
  );
}
